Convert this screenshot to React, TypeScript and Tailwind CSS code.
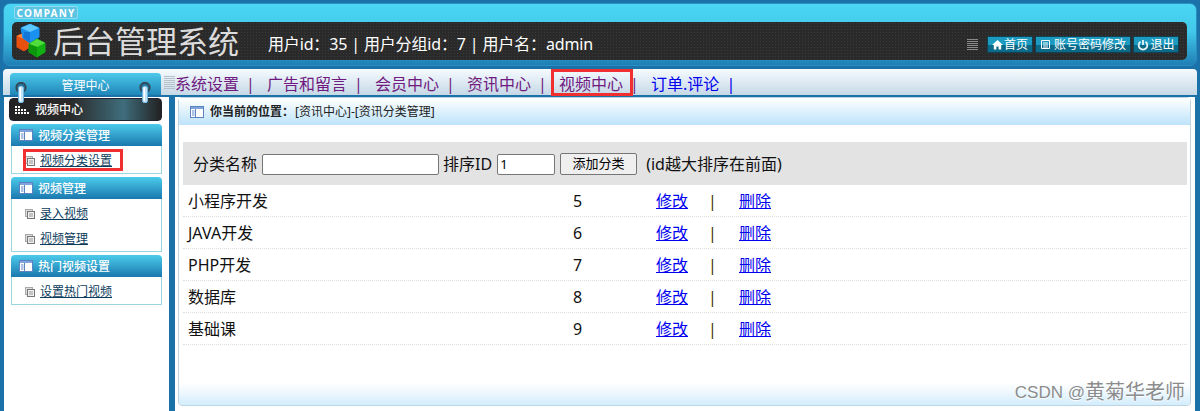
import { Fragment } from "react";

const font = "font-['Noto_Sans','Noto_Sans_CJK_SC',sans-serif]";

const topNav = [
  { label: "系统设置", visited: true },
  { label: "广告和留言", visited: true },
  { label: "会员中心", visited: true },
  { label: "资讯中心", visited: true },
  { label: "视频中心", visited: true, marked: true },
  { label: "订单.评论", visited: false },
];

const sideGroups = [
  { title: "视频分类管理", items: ["视频分类设置"], marked: true },
  { title: "视频管理", items: ["录入视频", "视频管理"] },
  { title: "热门视频设置", items: ["设置热门视频"] },
];

const categories = [
  { name: "小程序开发", id: 5 },
  { name: "JAVA开发", id: 6 },
  { name: "PHP开发", id: 7 },
  { name: "数据库", id: 8 },
  { name: "基础课", id: 9 },
];

// dots of the little stair icon in the dark sidebar bar
const stairDots = [1, 1, 0, 0, 0, 1, 1, 1, 1, 0, 1, 1, 1, 1, 1];

function Logo() {
  return (
    <svg width="30" height="34" viewBox="0 0 30 34" className="shrink-0">
      <path d="M1 12l7-3 7 3v10l-7 5-7-4z" fill="#e8500f" stroke="#e8500f" strokeLinejoin="round" />
      <path d="M1 12l7 3 7-3-7-3z" fill="#ff8a3c" />
      <path d="M5 4l9-4 9 4v9l-9 6-7-5z" fill="#1a90f0" stroke="#1a90f0" strokeLinejoin="round" />
      <path d="M5 4l9 4 9-4-9-4z" fill="#5cc8ff" />
      <path d="M8 8v0l6 0v11l-7-5z" fill="#1477d8" />
      <path d="M13 20l8-5 8 4v9l-8 5-8-5z" fill="#12b012" stroke="#12b012" strokeLinejoin="round" />
      <path d="M13 20l8 3 8-4-8-4z" fill="#4fdc3c" />
      <path d="M21 23v10l-8-5v-8z" fill="#0b960b" />
    </svg>
  );
}

function Grip({ className, lines }: { className: string; lines: number }) {
  return (
    <span className={`flex flex-col justify-between ${className}`}>
      {Array.from({ length: lines }).map((_, i) => (
        <span key={i} className="h-px bg-current" />
      ))}
    </span>
  );
}

function PanelIcon() {
  return (
    <svg width="14" height="12" viewBox="0 0 14 12" className="shrink-0">
      <rect x="0.5" y="0.5" width="13" height="11" fill="#fff" stroke="#5b83c4" />
      <rect x="1" y="1" width="12" height="2" fill="#7fa4dc" />
      <path d="M5.5 3v8" stroke="#5b83c4" />
      <path d="M2 5h2.5M2 7h2.5M2 9h2.5" stroke="#5b83c4" />
    </svg>
  );
}

function PageIcon() {
  return (
    <svg width="10" height="10" viewBox="0 0 10 10" className="shrink-0">
      <rect x="0.5" y="0.5" width="7" height="7" fill="#ddd" stroke="#aaa" />
      <rect x="2.5" y="2.5" width="7" height="7" fill="#eee" stroke="#777" />
      <path d="M4 5h4M4 7h4" stroke="#999" />
    </svg>
  );
}

function Pin() {
  return (
    <svg width="12" height="21" viewBox="0 0 12 21" className="block">
      <circle cx="6" cy="5.5" r="4.8" fill="#1f6f96" stroke="#39444c" strokeWidth="1.6" />
      <rect x="3.5" y="4" width="5" height="17" rx="2.5" fill="#bfe4fa" stroke="#6fb4dc" />
      <rect x="4.5" y="5" width="1.5" height="14" rx="0.75" fill="#fff" />
    </svg>
  );
}

function HeadButton({ children, width }: { children: React.ReactNode; width: string }) {
  return (
    <a className={`flex h-[17px] items-center justify-center gap-px border border-[#123f52] bg-[linear-gradient(#1c9ac0_0%,#1c9ac0_50%,#0a6a88_55%,#0a6a88_100%)] text-[12px] leading-none text-white ${width}`}>
      {children}
    </a>
  );
}

export default function App() {
  return (
    <div className={`relative flex h-[411px] w-[1200px] flex-col overflow-hidden bg-[#1a72a9] ${font}`}>
      <header className="mx-[3px] mt-[3px] h-[63px] shrink-0 rounded-[7px] border border-[#2b8ec2] bg-[linear-gradient(#4bd6f4_0%,#42c8ea_45%,#1f7fb5_100%)] px-2">
        <div className="ml-[2px] mt-[2px] flex h-[13px] w-[64px] items-center justify-center rounded-[2px] border border-[#8fdcf0] bg-[#5cc4e2] text-[10px] font-bold leading-none tracking-[1.2px] text-white">
          COMPANY
        </div>
        <div className="mt-[3px] flex h-[38px] w-[1175px] items-center rounded-[5px] bg-[#2a2a2a] bg-[radial-gradient(#3a3a3a_1px,transparent_1px)] bg-[length:3px_3px] pl-1 pr-2">
          <Logo />
          <span className="ml-[7px] text-[31px] leading-none text-[#dcdcdc]">后台管理系统</span>
          <span className="ml-[29px] mt-[5px] text-[16px] tracking-[-0.15px] text-white">用户id：35 | 用户分组id：7 | 用户名：admin</span>
          <Grip lines={6} className="ml-auto mr-[9px] mt-[7px] h-[12px] w-[11px] text-[#8a8a8a]" />
          <div className="mt-[7px] flex gap-[2px]">
            <HeadButton width="w-[46px]">
              <svg width="11" height="11" viewBox="0 0 11 11" fill="#fff"><path d="M5.5 1L0 6h1.8v4.5h2.6V7.5h2.2v3h2.6V6H11z" /></svg>
              首页
            </HeadButton>
            <HeadButton width="w-[96px]">
              <svg width="11" height="11" viewBox="0 0 11 11" fill="none" stroke="#fff"><path d="M1.5 1.5h8v8h-8zM3 4h5M3 6h5M3 8h5" /></svg>
              <span className="ml-[2px]">账号密码修改</span>
            </HeadButton>
            <HeadButton width="w-[46px]">
              <svg width="12" height="12" viewBox="0 0 12 12" fill="none" stroke="#e8f4f8" strokeWidth="1.8"><path d="M3.5 2.8a4.3 4.3 0 1 0 5 0M6 1v5" /></svg>
              退出
            </HeadButton>
          </div>
        </div>
      </header>

      <nav className="relative mx-[3px] mt-[3px] flex h-[26px] shrink-0 items-center rounded-t-[4px] bg-[linear-gradient(#f6fbff,#c6d8e6)] pl-[7px]">
        <div className="relative mt-[4px] h-[22px] w-[151px] shrink-0 rounded-t-[4px] bg-[linear-gradient(#4cc9ea,#1f86b8)] text-center text-[12px] leading-[25px] text-white">
          管理中心
          <span className="absolute left-[5px] top-[9px]"><Pin /></span>
          <span className="absolute right-[10px] top-[9px]"><Pin /></span>
        </div>
        <Grip lines={7} className="ml-[3px] h-[13px] w-[11px] text-[#b5c0c8]" />
        <div className="mt-[4px] flex items-center text-[16px] leading-none">
          {topNav.map((n) => (
            <Fragment key={n.label}>
              <span className={`relative ${n.visited ? "text-[#701a80]" : "text-[#0000ee]"}`}>
                {n.label}
                {n.marked && <span className="absolute -left-[8px] -right-[10px] -top-[7px] -bottom-[4px] border-[3px] border-[#f03030]" />}
              </span>
              <span className={`w-[28px] pl-[7px] ${n.visited ? "text-[#701a80]" : "text-[#0000ee]"}`}>|</span>
            </Fragment>
          ))}
        </div>
      </nav>

      <div className="flex min-h-0 flex-1">
        <aside className="ml-[4px] mt-[2px] w-[165px] shrink-0 bg-white px-[5px] pt-px">
          <div className="flex h-[23px] w-[153px] items-center gap-[6px] rounded-[4px] border border-[#223] bg-[linear-gradient(90deg,#222_0%,#2a2a2a_40%,#3f6d7c_75%,#222_100%)] pl-[5px] text-[12px] font-medium text-white">
            <span className="grid grid-cols-5 gap-px">
              {stairDots.map((on, i) => (
                <span key={i} className={`h-[2px] w-[2px] ${on ? "bg-white" : ""}`} />
              ))}
            </span>
            <span className="pt-px">视频中心</span>
          </div>
          <div className="ml-[2px] mt-[3px] flex w-[151px] flex-col gap-[3px]">
            {sideGroups.map((g) => (
              <section key={g.title}>
                <h3 className="flex h-[22px] items-center gap-[5px] rounded-t-[4px] bg-[linear-gradient(#4ccbeb,#1a78ae)] pl-[8px] text-[12px] font-medium text-white">
                  <PanelIcon />
                  <span className="pt-[2px]">{g.title}</span>
                </h3>
                <ul className="border border-t-0 border-[#9ad5e2] pt-[2px]">
                  {g.items.map((item) => (
                    <li key={item} className="relative flex h-[25px] items-center gap-[5px] pl-[13px] text-[12px]">
                      <PageIcon />
                      <a className="text-[#0b3c5c] underline">{item}</a>
                      {g.marked && <span className="absolute bottom-[2px] left-[11px] top-px w-[100px] border-[3px] border-[#f03030]" />}
                    </li>
                  ))}
                </ul>
              </section>
            ))}
          </div>
        </aside>

        <div className="w-[6px] shrink-0" />

        <main className="mr-[5px] mt-[2px] min-w-0 flex-1 bg-white pl-[3px] pr-[4px]">
          <div className="flex h-[309px] flex-col rounded-[4px] border border-[#bcd4e4] bg-white">
            <div className="flex h-[27px] shrink-0 items-center gap-[6px] bg-[linear-gradient(#fff,#bde3fa)] pl-[11px] text-[12px] text-[#222]">
              <PanelIcon />
              <b className="pt-px font-bold">你当前的位置：</b>
              <span className="-ml-[5px] pt-px">[资讯中心]-[资讯分类管理]</span>
            </div>
            <div className="flex-1 pl-[4px] pr-[3px] pt-[17px] text-[16px] leading-none text-[#111]">
              <form className="flex h-[43px] items-center bg-[#e3e3e3] pl-[10px]">
                分类名称
                <input className="ml-[5px] mt-px h-[21px] w-[177px] rounded-[2px] border border-[#767676] bg-white" />
                <span className="ml-[4px]">排序ID</span>
                <input defaultValue="1" className="ml-[5px] mt-px h-[21px] w-[58px] rounded-[2px] border border-[#767676] bg-white px-[2px] text-[13px] text-black" />
                <button type="button" className="ml-[5px] h-[22px] w-[77px] rounded-[2px] border border-[#767676] bg-[#efefef] text-[13px] text-black">添加分类</button>
                <span className="ml-[9px]">(id越大排序在前面)</span>
              </form>
              {categories.map((c) => (
                <div key={c.id} className="flex h-[32px] items-center border-b border-dotted border-[#ddd] pl-[5px]">
                  <span className="w-[385px]">{c.name}</span>
                  <span className="w-[83px]">{c.id}</span>
                  <a className="w-[52px] text-[#0000ee] underline">修改</a>
                  <span className="w-[31px] text-[#4a3000]">|</span>
                  <a className="text-[#0000ee] underline">删除</a>
                </div>
              ))}
            </div>
            <div className="h-[22px] shrink-0 rounded-b-[4px] bg-[linear-gradient(#fff,#d4edfd)]" />
          </div>
        </main>
      </div>

      <span className="absolute bottom-[9px] right-[15px] flex items-center text-[#8c8c8c] [text-shadow:0_1px_1px_#fff]">
        <span className="font-['Liberation_Sans',sans-serif] text-[17px] leading-none">CSDN @</span>
        <span className="text-[20px] leading-none">黄菊华老师</span>
      </span>
    </div>
  );
}
